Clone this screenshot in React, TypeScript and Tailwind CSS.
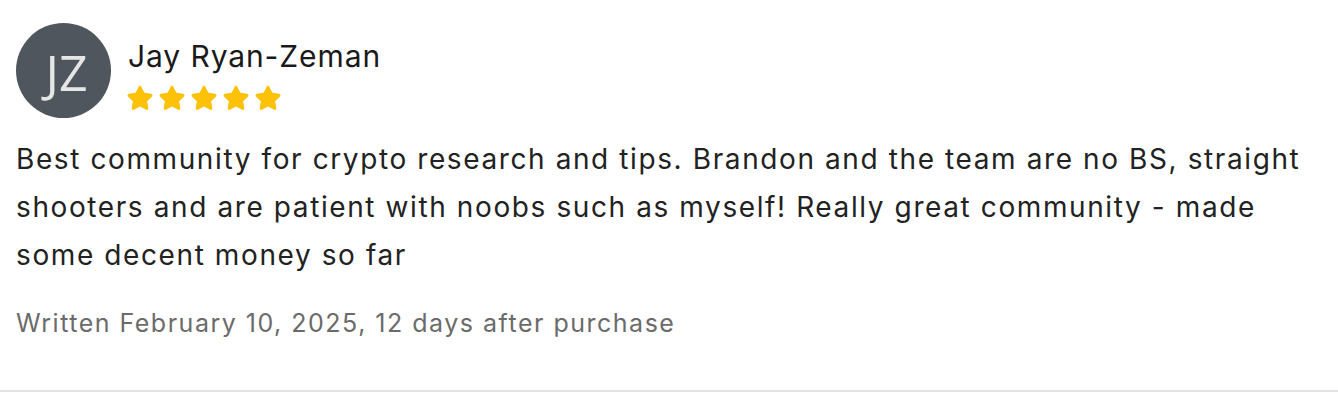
const Star = () => (
  <svg viewBox="0 0 24 24" className="w-[30px] h-[30px]" fill="#fdc107">
    <path d="M12 2.2c.5 0 .9.3 1.1.7l2.4 4.9 5.4.8c.5.1.9.4 1 .9.2.5 0 1-.3 1.3l-3.9 3.8.9 5.4c.1.5-.1 1-.5 1.3-.4.3-.9.3-1.3.1L12 18.8l-4.8 2.6c-.4.2-.9.2-1.3-.1-.4-.3-.6-.8-.5-1.3l.9-5.4-3.9-3.8c-.4-.3-.5-.8-.3-1.3.2-.5.6-.8 1-.9l5.4-.8 2.4-4.9c.2-.4.6-.7 1.1-.7z" />
  </svg>
);

const App = () => {
  return (
    <div className="w-full h-[416px] bg-white font-['Inter',sans-serif] [font-optical-sizing:none] text-[#222222]">
      <div className="flex flex-col pl-[16px] pr-[20px] pt-[23px]">
        <div className="flex items-start gap-[17px]">
          <div className="w-[95px] h-[95px] rounded-full bg-[#50565e] flex items-center justify-center">
            <span className="text-[50px] leading-none font-normal text-[#e6e6e6] font-['Open_Sans',sans-serif] pt-[2px] pl-[6px]">
              JZ
            </span>
          </div>
          <div className="flex flex-col pt-[16px]">
            <h3 className="text-[30px] leading-[34px] tracking-[0.9px] text-[#1a1a1a]">
              Jay Ryan-Zeman
            </h3>
            <div className="flex gap-[2px] mt-[10px] -ml-[3px]">
              <Star />
              <Star />
              <Star />
              <Star />
              <Star />
            </div>
          </div>
        </div>
        <p className="mt-[17px] text-[28px] leading-[48px] tracking-[1.6px] max-w-[1300px]">
          Best community for crypto research and tips. Brandon and the team are no BS, straight
          shooters and are patient with noobs such as myself! Really great community - made some
          decent money so far
        </p>
        <p className="mt-[29px] text-[25px] leading-[30px] tracking-[1.5px] text-[#6b6b6b]">
          Written February 10, 2025, 12 days after purchase
        </p>
      </div>
      <div className="mt-[52px] w-full h-[2px] bg-[#e2e2e2]"></div>
    </div>
  );
};

export default App;
